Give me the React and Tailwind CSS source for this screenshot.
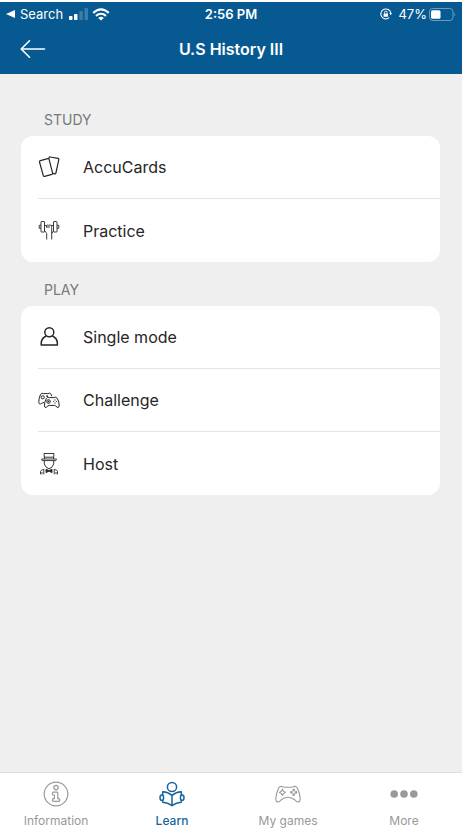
import React, { useState } from "react";

const CardsIcon = () => (
  <svg width="22" height="22" viewBox="0 0 22 22" fill="none" stroke="currentColor" strokeWidth="1.2" strokeLinejoin="round">
    <path d="M2.4 4.6 L9.8 2.6 Q10.8 2.4 11.1 3.3 L14.6 17.1 Q14.8 18.1 13.9 18.4 L6.6 20.4 Q5.6 20.6 5.3 19.7 L1.5 6 Q1.3 5 2.4 4.6Z" />
    <path d="M10.8 2.6 L11 1.8 Q11.2 0.8 12.2 1 L20 2.4 Q21 2.6 20.8 3.6 L17.9 17 Q17.7 18 16.7 17.8 L14.7 17.4" />
  </svg>
);

const PracticeIcon = () => (
  <svg width="22" height="22" viewBox="0 0 22 22" fill="none" stroke="currentColor" strokeWidth="0.9" strokeLinejoin="round">
    <rect x="3" y="1.5" width="3.5" height="10.5" rx="0.5" />
    <rect x="15.5" y="1.5" width="3.5" height="10.5" rx="0.5" />
    <path d="M3 5.3 H1.2 V8.2 H3 M19 5.3 H20.8 V8.2 H19" />
    <path d="M6.5 5.5 H8.5 M13.5 5.5 H15.5" />
    <path d="M8.5 7.5 V5.5 Q9.3 4.3 10.2 5.5 Q11 4.3 12 5.5 Q12.8 4.3 13.7 5.5 V7.5 M8.5 7 H12" />
    <path d="M6.5 8.5 V10.5 L8.7 13.5 V19.5 M13.7 7.5 V19.5 M13.7 13.5 L15.5 11" />
  </svg>
);

const PersonIcon = () => (
  <svg width="22" height="22" viewBox="0 0 22 22" fill="none" stroke="currentColor" strokeWidth="1.5" strokeLinejoin="round">
    <circle cx="11.3" cy="6.3" r="4.5" />
    <path d="M8.2 10 C5 11.5 3.2 14 3.2 17.5 V19 H19.4 V17.5 C19.4 14 17.6 11.5 14.4 10" />
  </svg>
);

const ChallengeIcon = () => (
  <svg width="22" height="22" viewBox="0 0 22 22" fill="none" stroke="currentColor" strokeWidth="1" strokeLinejoin="round">
    <path d="M6 13.6 H5 Q3.5 14.6 2.5 15 Q1 15.4 0.8 13.5 Q0.7 9 2.5 5.4 Q4 3.5 5.8 4.6 H9.5 Q12 3.4 13.3 5.4 L13.8 7.2" />
    <circle cx="4.7" cy="8.3" r="1.6" />
    <path d="M9.2 6.4 V8 M8.4 7.2 H10" />
    <path d="M8.4 9.3 Q9.6 7.3 11.4 8.6 H15.8 Q17.8 7.4 19.3 9.3 Q21.4 13 21.2 17 Q20.8 19.2 19 18.2 Q17.5 16.4 16.3 16.4 H11.3 Q10 16.4 8.6 18.2 Q6.7 19.2 6.4 17 Q6.3 13 8.4 9.3Z" />
    <circle cx="10.5" cy="12.5" r="1.8" />
    <path d="M10.5 11.7 V13.3 M9.7 12.5 H11.3" />
    <path d="M17 10.6 V11.4 M17 13.6 V14.4 M15.1 12.5 H15.9 M18.1 12.5 H18.9" strokeWidth="1.2" />
  </svg>
);

const HostIcon = () => (
  <svg width="22" height="22" viewBox="0 0 22 22" fill="none" stroke="currentColor" strokeWidth="0.9" strokeLinejoin="round">
    <path d="M6.5 6 L6 0.5 H16 L15.5 6 M6.2 4.2 H15.8" />
    <path d="M3.5 6 H18.5 L17.8 7.6 H4.2Z" />
    <path d="M6.3 7.6 V11 Q7.3 14.8 11 15.8 Q14.7 14.8 15.7 11 V7.6" />
    <path d="M11 17.6 L8 16.2 V19.6 L11 18.2 L14 19.6 V16.2Z" fill="currentColor" />
    <path d="M2.5 21.3 V18.5 Q2.8 17 5.8 16.3 V21.3 M19.5 21.3 V18.5 Q19.2 17 16.2 16.3 V21.3 M4 19 V21.3 M18 19 V21.3" />
  </svg>
);

const InfoIcon = () => (
  <svg width="26" height="26" viewBox="0 0 26 26" fill="none" stroke="currentColor" strokeWidth="1.2" strokeLinejoin="round">
    <circle cx="13" cy="13" r="11.8" />
    <circle cx="13" cy="6.6" r="2.2" />
    <path d="M10.3 11.2 H14 Q14.8 11.2 14.8 12 V17.7 H15.7 Q16.6 17.7 16.6 18.6 V19.6 Q16.6 20.4 15.7 20.4 H10.4 Q9.5 20.4 9.5 19.6 V18.6 Q9.5 17.7 10.4 17.7 H11.4 V14 H10.3 Q9.5 14 9.5 13.1 V12 Q9.5 11.2 10.3 11.2Z" />
  </svg>
);

const LearnIcon = () => (
  <svg width="26" height="26" viewBox="0 0 26 26" fill="none" stroke="currentColor" strokeWidth="1.5" strokeLinejoin="round">
    <circle cx="13" cy="6" r="4.6" />
    <path d="M3.7 14 V10.8 Q9 11 13 14.4 Q17 11 22.3 10.8 V14 M3.7 19.3 V21.3 Q9 21.6 13 24.7 Q17 21.6 22.3 21.3 V19.3 M13 14.4 V24.7" />
    <ellipse cx="2.8" cy="16.7" rx="1.8" ry="2.6" />
    <ellipse cx="23.2" cy="16.7" rx="1.8" ry="2.6" />
  </svg>
);

const GamesIcon = () => (
  <svg width="26" height="26" viewBox="0 0 26 26" fill="none" stroke="currentColor" strokeWidth="1.1" strokeLinejoin="round">
    <path d="M3.6 7 Q5.2 4.6 7.6 5.8 Q8.4 6.2 9.2 6.2 H16.8 Q17.6 6.2 18.4 5.8 Q20.8 4.6 22.4 7 Q24.7 11.5 25.2 17.5 Q25.2 21.5 22.4 21 Q21.4 20.6 20 19 Q17 16.2 13 16.2 Q9 16.2 6 19 Q4.6 20.6 3.6 21 Q0.8 21.5 0.8 17.5 Q1.3 11.5 3.6 7Z" />
    <path d="M7.4 8.4 L8.5 10.2 L10.4 11.4 L8.5 12.6 L7.4 14.4 L6.3 12.6 L4.4 11.4 L6.3 10.2Z" />
    <circle cx="18.7" cy="9.1" r="0.8" />
    <circle cx="18.7" cy="13.7" r="0.8" />
    <circle cx="16.4" cy="11.4" r="0.8" />
    <circle cx="21" cy="11.4" r="0.8" />
  </svg>
);

const MoreIcon = () => (
  <svg width="28" height="26" viewBox="0 0 28 26" fill="currentColor">
    <circle cx="4.2" cy="13" r="3.8" />
    <circle cx="14" cy="13" r="3.8" />
    <circle cx="23.8" cy="13" r="3.8" />
  </svg>
);

const sections = [
  {
    title: "STUDY",
    items: [
      { label: "AccuCards", icon: CardsIcon },
      { label: "Practice", icon: PracticeIcon },
    ],
  },
  {
    title: "PLAY",
    items: [
      { label: "Single mode", icon: PersonIcon },
      { label: "Challenge", icon: ChallengeIcon },
      { label: "Host", icon: HostIcon },
    ],
  },
];

const tabs = [
  { label: "Information", icon: InfoIcon },
  { label: "Learn", icon: LearnIcon },
  { label: "My games", icon: GamesIcon },
  { label: "More", icon: MoreIcon },
];

const StatusBar = () => (
  <div className="grid h-6 grid-cols-[1fr_auto_1fr] items-center px-1.5 text-[13px] leading-4">
    <div className="flex items-center">
      <button type="button" className="flex items-center gap-1">
        <svg width="10" height="8" viewBox="0 0 10 8" fill="currentColor">
          <path d="M9 0 V8 L0 4Z" />
        </svg>
        <span>Search</span>
      </button>
      <svg className="ml-1.5" width="19" height="12" viewBox="0 0 19 12" fill="currentColor">
        <rect x="0" y="8" width="3.5" height="4" rx="0.8" />
        <rect x="5" y="6" width="3.5" height="6" rx="0.8" />
        <rect x="10.3" y="3" width="3.5" height="9" rx="0.8" opacity="0.22" />
        <rect x="15.5" y="0" width="3.5" height="12" rx="0.8" opacity="0.22" />
      </svg>
      <svg className="ml-1" width="18" height="13" viewBox="0 0 18 13" fill="none" stroke="currentColor" strokeWidth="2.1">
        <path d="M1.2 4.9 Q9 -2.2 16.8 4.9" />
        <path d="M4 7.9 Q9 3.6 14 7.9" />
        <path d="M9 12.6 L6.2 9.9 Q9 7.8 11.8 9.9Z" fill="currentColor" stroke="none" />
      </svg>
    </div>
    <span className="font-semibold">2:56 PM</span>
    <div className="flex items-center justify-end">
      <svg className="mr-1.5" width="12" height="12" viewBox="0 0 12 12" fill="none" stroke="currentColor" strokeWidth="1.1">
        <path d="M10.8 5 A5 5 0 1 0 9.2 9.7" />
        <path d="M9.2 5 H12 L10.7 7.2Z" fill="currentColor" stroke="none" />
        <rect x="3.6" y="5.4" width="4.4" height="3.4" rx="0.4" fill="currentColor" stroke="none" />
        <path d="M4.5 5.6 V4.4 Q4.5 3.2 5.8 3.2 Q7.1 3.2 7.1 4.4 V5.6" strokeWidth="0.9" />
      </svg>
      <span>47%</span>
      <svg className="ml-0.5" width="27" height="13" viewBox="0 0 27 13">
        <rect x="0.5" y="0.5" width="23.5" height="12" rx="3.2" fill="none" stroke="currentColor" opacity="0.4" />
        <rect x="2" y="2.2" width="9.5" height="8.6" rx="1.5" fill="currentColor" />
        <path d="M25.2 4.5 Q27 6.5 25.2 8.5Z" fill="currentColor" opacity="0.4" />
      </svg>
    </div>
  </div>
);

const Section = ({ title, items }) => (
  <section>
    <h2 className="mb-1.5 pl-[23px] text-sm leading-5 text-[#77787a]">{title}</h2>
    <ul className="overflow-hidden rounded-xl bg-white pl-[17px]">
      {items.map(({ label, icon: Icon }) => (
        <li key={label} className="flex h-[63px] border-b border-[#e4e4e6] last:border-b-0">
          <button type="button" className="flex w-full items-center gap-[23px] text-left text-base text-[#262626]">
            <Icon />
            <span>{label}</span>
          </button>
        </li>
      ))}
    </ul>
  </section>
);

const App = () => {
  const [activeTab, setActiveTab] = useState("Learn");

  return (
    <div className="flex min-h-screen flex-col bg-white pr-[3px] pt-0.5 font-['Inter',sans-serif]">
      <header className="bg-[#075a91] text-white">
        <StatusBar />
        <div className="grid h-12 grid-cols-[1fr_auto_1fr] items-center px-5 pb-0.5">
          <button type="button" aria-label="Back">
            <svg width="26" height="20" viewBox="0 0 26 20" fill="none" stroke="currentColor" strokeWidth="1.6" strokeLinecap="round" strokeLinejoin="round">
              <path d="M9.5 1.8 L1.2 10 L9.5 18.2 M1.2 10 H24.5" />
            </svg>
          </button>
          <h1 className="text-base font-semibold">U.S History III</h1>
        </div>
      </header>

      <main className="flex flex-1 flex-col gap-[18px] bg-[#efefef] pl-[21px] pr-[22px] pt-9">
        {sections.map((section) => (
          <Section key={section.title} {...section} />
        ))}
      </main>

      <nav className="-ml-0.5 grid grid-cols-4 border-t border-[#dfdfe0] bg-white pb-2 pt-2">
        {tabs.map(({ label, icon: Icon }) => (
          <button
            key={label}
            type="button"
            onClick={() => setActiveTab(label)}
            className={`flex flex-col items-center gap-1.5 text-xs ${
              activeTab === label ? "font-medium text-[#17659c]" : "text-[#999999]"
            }`}
          >
            <Icon />
            <span>{label}</span>
          </button>
        ))}
      </nav>
    </div>
  );
};

export default App;
